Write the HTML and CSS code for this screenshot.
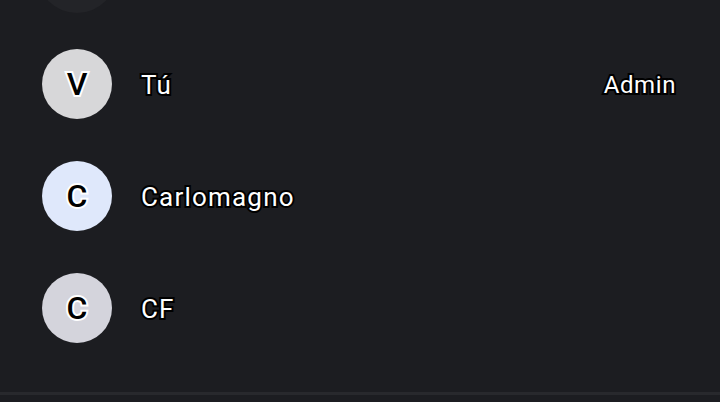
FILE: index.html
```html
<!DOCTYPE html>
<html lang="es">
<head>
<meta charset="utf-8">
<link rel="stylesheet" href="styles.css">
</head>
<body>
<div class="screen">
  <div class="peek"><div class="peek-circle"></div></div>
  <ul class="members">
    <li class="member">
      <div class="avatar avatar-gray">V</div>
      <span class="name">Tú</span>
      <span class="role">Admin</span>
    </li>
    <li class="member">
      <div class="avatar avatar-blue">C</div>
      <span class="name">Carlomagno</span>
    </li>
    <li class="member">
      <div class="avatar avatar-lilac">C</div>
      <span class="name">CF</span>
    </li>
  </ul>
  <div class="divider"></div>
</div>
</body>
</html>
```
FILE: styles.css
```css
html, body {
  margin: 0;
  padding: 0;
  background: #1c1d21;
}
.screen {
  width: 720px;
  height: 402px;
  overflow: hidden;
  font-family: Roboto, "Noto Sans", sans-serif;
}
.peek {
  height: 13px;
  overflow: hidden;
  padding-left: 37px;
}
.peek-circle {
  width: 80px;
  height: 80px;
  border-radius: 50%;
  background: #232428;
  margin-top: -67px;
}
.members {
  list-style: none;
  margin: 15px 0 0;
  padding: 0;
}
.member {
  height: 112px;
  display: flex;
  align-items: center;
  padding: 0 44px 0 42px;
}
.avatar {
  width: 70px;
  height: 70px;
  border-radius: 50%;
  flex: none;
  display: flex;
  align-items: center;
  justify-content: center;
  font-size: 32px;
  font-weight: 500;
  color: #000;
  -webkit-text-stroke: 4px #fff;
  paint-order: stroke fill;
}
.avatar-gray { background: #d7d7d9; }
.avatar-blue { background: #dfe8fb; }
.avatar-lilac { background: #d4d4dc; }
.name {
  margin-left: 29px;
  padding-top: 2px;
  font-size: 26px;
  letter-spacing: 1.2px;
  color: #fff;
  flex: 1;
  -webkit-text-stroke: 4px #000;
  paint-order: stroke fill;
}
.role {
  padding-top: 2px;
  font-size: 24px;
  letter-spacing: 0.6px;
  color: #fff;
  -webkit-text-stroke: 4px #000;
  paint-order: stroke fill;
}
.divider {
  margin-top: 28px;
  height: 3px;
  background: #28292d;
}
```
